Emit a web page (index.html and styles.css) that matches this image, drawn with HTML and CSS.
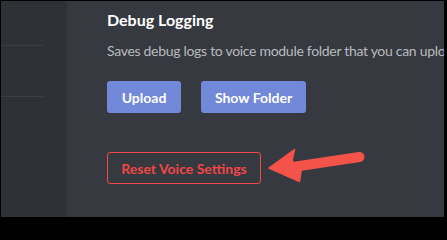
FILE: index.html
```html
<!DOCTYPE html>
<html>
<head>
<meta charset="utf-8">
<link rel="stylesheet" href="styles.css">
</head>
<body>
<div class="frame">
  <aside class="sidebar">
    <div class="sep sep-1"></div>
    <div class="sep sep-2"></div>
  </aside>
  <main class="main">
    <h2 class="title">Debug Logging</h2>
    <p class="desc">Saves debug logs to voice module folder that you can upload</p>
    <div class="btn-row">
      <button class="btn btn-primary btn-upload">Upload</button>
      <button class="btn btn-primary btn-folder">Show Folder</button>
    </div>
    <button class="btn btn-danger">Reset Voice Settings</button>
  </main>
  <svg class="arrow" width="115" height="50" viewBox="0 0 115 50">
    <path d="M 99.5 17 L 36 26.5" stroke="#f4534a" stroke-width="10" stroke-linecap="round" fill="none"/>
    <path d="M 9 28 L 34.5 9.5 L 32 20.5 L 41 31.5 L 39.5 41.5 Z" fill="#f4534a" stroke="#f4534a" stroke-width="1.5" stroke-linejoin="round"/>
  </svg>
</div>
</body>
</html>
```
FILE: styles.css
```css
html, body {
  margin: 0;
  padding: 0;
  background: #000;
}
body {
  width: 447px;
  height: 219px;
  overflow: hidden;
  font-family: Lato, "Open Sans", sans-serif;
}
.frame {
  position: relative;
  margin: 1px 0 0 1px;
  width: 443px;
  height: 216px;
  display: flex;
  overflow: hidden;
  background: #36393f;
}
.sidebar {
  width: 66px;
  flex: none;
  background: #2f3136;
  display: flex;
  flex-direction: column;
}
.sep {
  width: 42px;
  height: 1px;
  background: #3c3e43;
}
.sep-1 { margin-top: 44px; }
.sep-2 { margin-top: 50px; }
.main {
  flex: 1;
  padding-left: 40px;
  min-width: 0;
}
.title {
  margin: 9px 0 0;
  font-size: 16px;
  line-height: 20px;
  font-weight: 700;
  color: #ffffff;
}
.desc {
  margin: 11px 0 0;
  font-size: 14px;
  line-height: 20px;
  letter-spacing: -0.3px;
  color: #b9bbbe;
  white-space: nowrap;
}
.btn-row {
  display: flex;
  gap: 20px;
  margin-top: 20px;
}
.btn {
  font-family: inherit;
  font-size: 14px;
  font-weight: 700;
  height: 32px;
  padding: 0;
  border-radius: 3px;
  border: none;
  display: block;
}
.btn-primary {
  background: #7289da;
  color: #ffffff;
}
.btn-upload { width: 74px; }
.btn-folder { width: 105px; }
.btn-danger {
  margin-top: 39px;
  width: 154px;
  background: transparent;
  border: 1px solid #f04747;
  color: #f04747;
}
.arrow {
  position: absolute;
  left: 259px;
  top: 139px;
}
```
